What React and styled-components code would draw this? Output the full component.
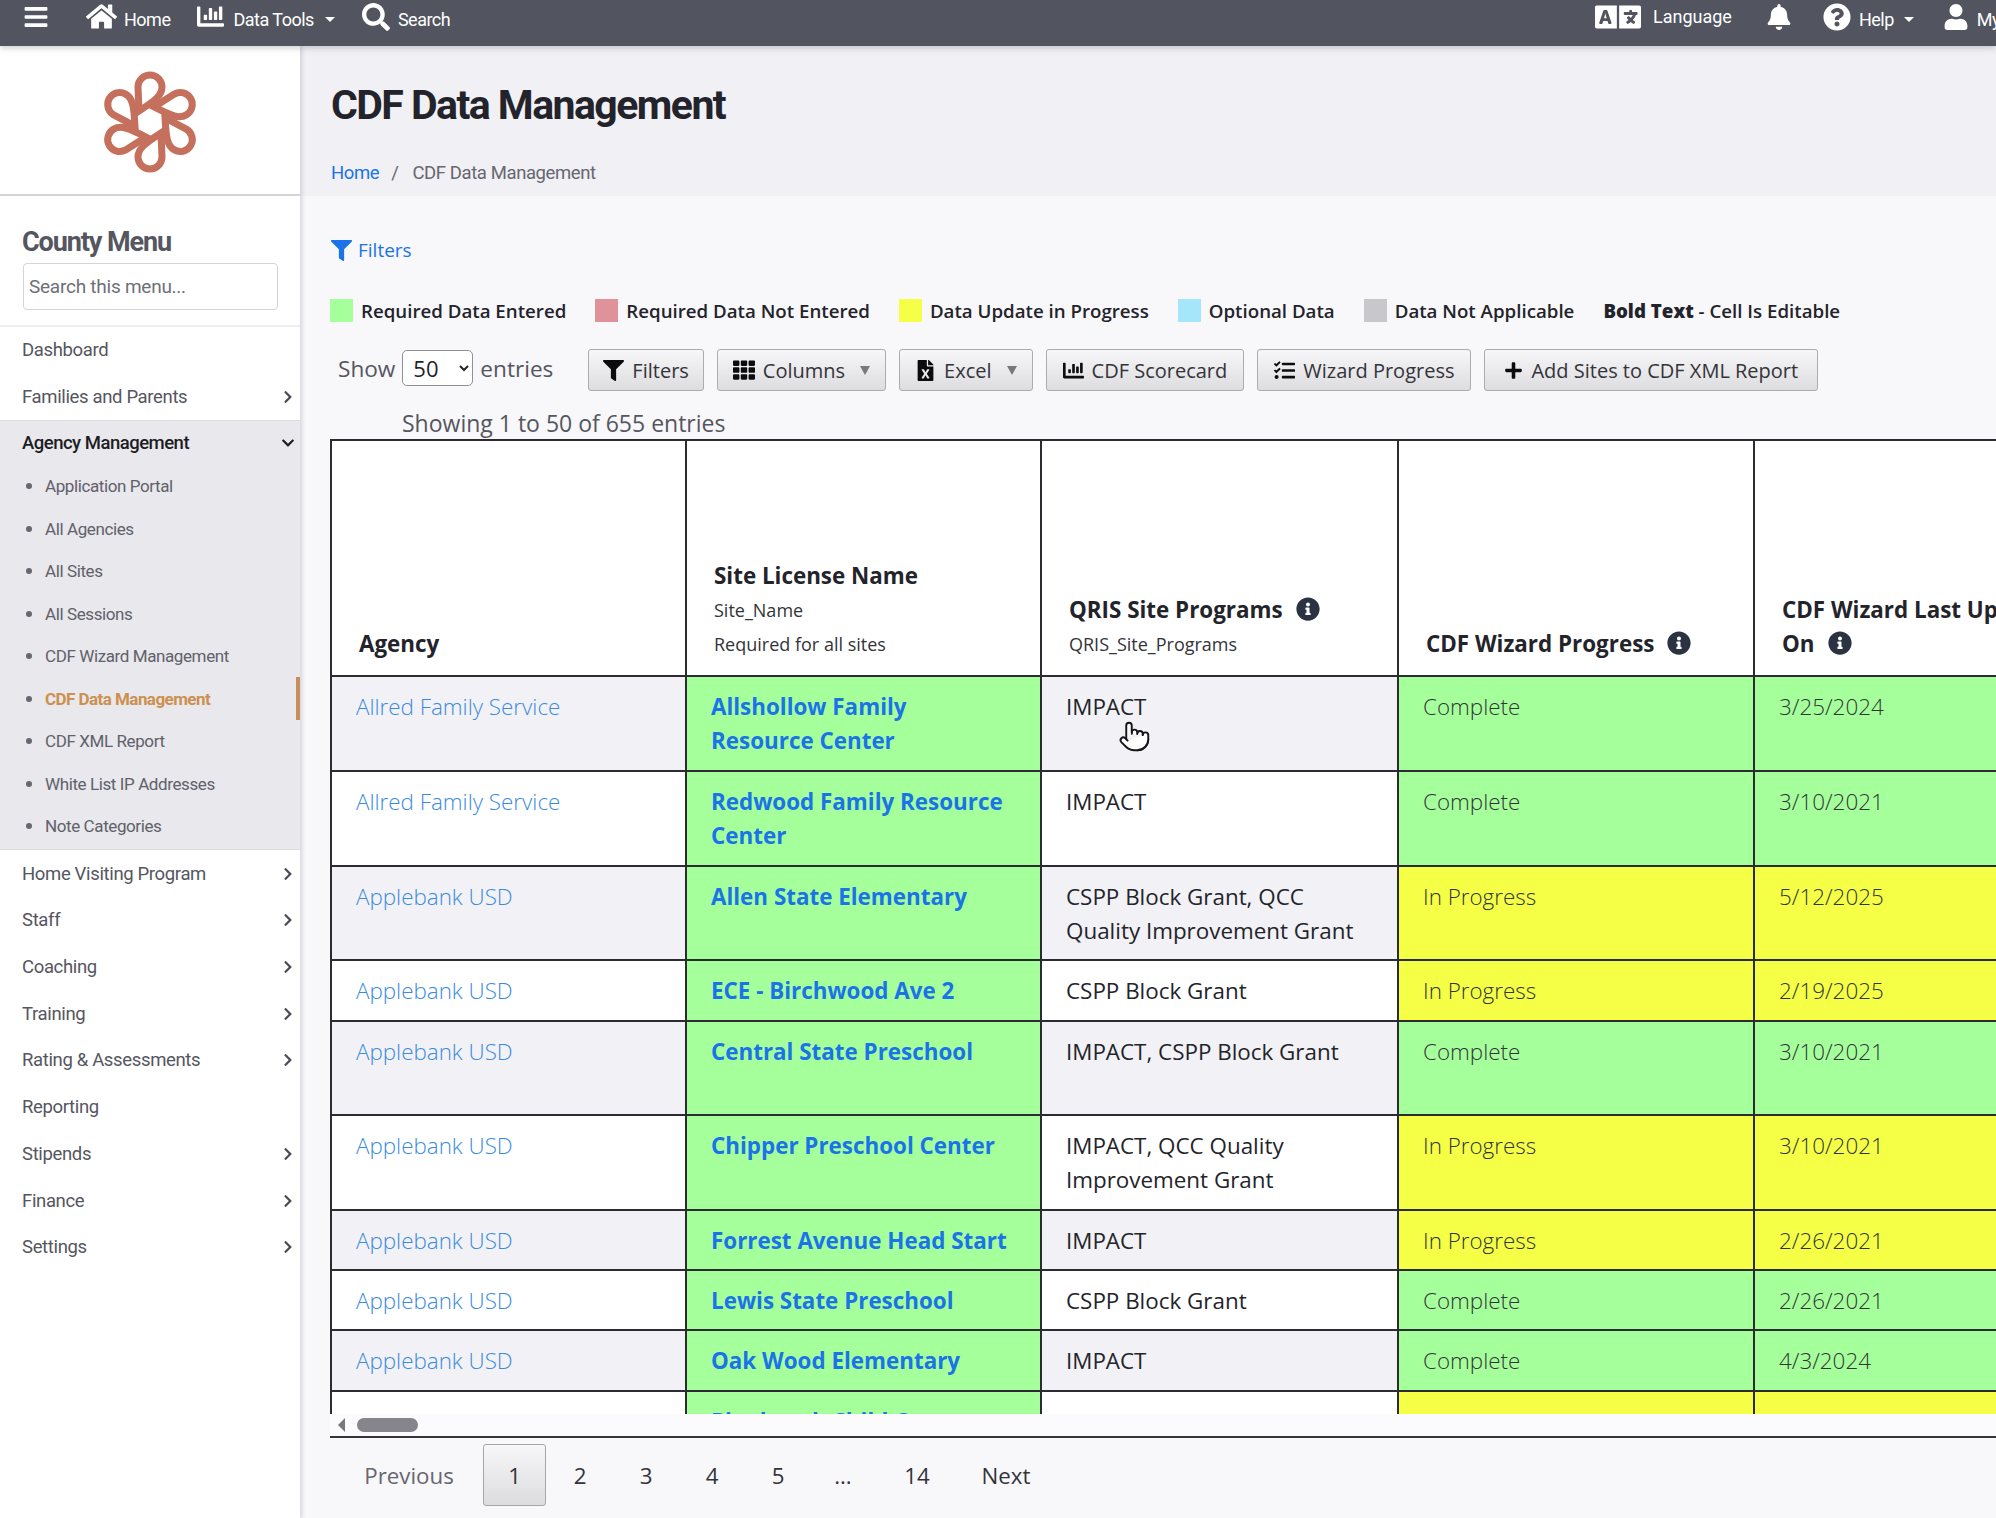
import React from 'react';
import styled, { createGlobalStyle } from 'styled-components';
import {
  FaBars, FaHome, FaChartBar, FaSearch, FaLanguage, FaBell, FaQuestionCircle, FaUser,
  FaFilter, FaTh, FaFileExcel, FaTasks, FaPlus, FaChevronRight, FaChevronDown, FaInfoCircle,
} from 'react-icons/fa';
import { Pointer } from 'lucide-react';

const GlobalStyle = createGlobalStyle`
  html, body {
    margin: 0;
    height: 100%;
    overflow: hidden;
    background: #f8f7fa;
    font-family: 'Open Sans', 'Liberation Sans', sans-serif;
  }
  * { box-sizing: border-box; }
`;

const Page = styled.div`
  width: 1996px;
  height: 1518px;
  display: flex;
  flex-direction: column;
  overflow: hidden;
`;

const TopBar = styled.header`
  flex: 0 0 46px;
  display: flex;
  align-items: center;
  padding-bottom: 13px;
  background: #52555f;
  color: #fff;
  font-family: Roboto, sans-serif;
  font-size: 18px;
  letter-spacing: -0.5px;
  overflow: hidden;
  position: relative;
  z-index: 3;
  box-shadow: 0 2px 6px rgba(60, 60, 80, 0.25);
`;

const TopLeft = styled.div`
  flex: 0 0 1595px;
  display: flex;
  align-items: center;
  padding-left: 23px;
  svg { display: block; }
`;

const TopRight = styled.div`
  flex: 0 0 auto;
  display: flex;
  align-items: center;
  white-space: nowrap;
  svg { display: block; }
`;

const NavItem = styled.span`
  display: flex;
  align-items: center;
  gap: ${(p) => p.$gap || 8}px;
  margin-left: ${(p) => p.$left || 0}px;
`;

const NavText = styled.span`
  padding-top: ${(p) => p.$down || 0}px;
  letter-spacing: ${(p) => (p.$wide ? 0 : -0.5)}px;
`;

const Caret = styled.i`
  width: 0;
  height: 0;
  margin-left: 2px;
  margin-top: 5px;
  border-left: 5px solid transparent;
  border-right: 5px solid transparent;
  border-top: 5px solid #fff;
`;

const Body = styled.div`
  flex: 1;
  display: flex;
  min-height: 0;
`;

const Sidebar = styled.aside`
  flex: 0 0 300px;
  background: #fff;
  display: flex;
  flex-direction: column;
  font-family: Roboto, sans-serif;
  position: relative;
  z-index: 2;
  box-shadow: 2px 0 4px rgba(60, 60, 80, 0.18);
`;

const LogoBox = styled.div`
  flex: 0 0 150px;
  display: flex;
  justify-content: center;
  padding-top: 24px;
  border-bottom: 2px solid #d4d3d8;
`;

const MenuHead = styled.div`
  flex: 0 0 131px;
  padding: 28px 22px 0 23px;
  border-bottom: 2px solid #eeedf0;
`;

const MenuTitle = styled.h2`
  margin: 0 0 3px -1px;
  font-size: 27px;
  line-height: 36px;
  font-weight: 700;
  letter-spacing: -1.1px;
  color: #55565f;
`;

const MenuSearch = styled.input`
  width: 255px;
  height: 47px;
  padding: 0 5px;
  border: 1px solid #d4d3d8;
  border-radius: 4px;
  background: #fff;
  font-family: Roboto, sans-serif;
  font-size: 19px;
  letter-spacing: -0.25px;
  color: #55565f;
  &::placeholder { color: #6e6f78; opacity: 1; }
`;

const MenuRow = styled.div`
  height: ${(p) => (p.$open ? 43.5 : 46.7)}px;
  display: flex;
  align-items: center;
  justify-content: space-between;
  padding: 0 5px 0 22px;
  font-size: 18.5px;
  font-weight: ${(p) => (p.$open ? 500 : 400)};
  color: ${(p) => (p.$open ? '#1d1d24' : '#55565f')};
  letter-spacing: ${(p) => (p.$open ? -0.5 : -0.35)}px;
  svg { font-size: 14px; color: ${(p) => (p.$open ? '#1d1d24' : '#4a4b54')}; }
`;

const MenuGroup = styled.div`
  background: #e9e8ec;
  border-top: 1px solid #dddce0;
  border-bottom: 1px solid #dddce0;
  padding-bottom: 2px;
`;

const SubRow = styled.div`
  height: 42.5px;
  display: flex;
  align-items: center;
  position: relative;
  padding-left: 26px;
  font-size: 17px;
  letter-spacing: ${(p) => (p.$active ? -0.55 : -0.4)}px;
  color: ${(p) => (p.$active ? '#cc9050' : '#60616a')};
  font-weight: ${(p) => (p.$active ? 700 : 400)};
  &::before {
    content: '';
    width: 6px;
    height: 6px;
    border-radius: 50%;
    background: #666770;
    margin-right: 13px;
  }
`;

const ActiveBar = styled.i`
  position: absolute;
  right: 0;
  top: 0;
  bottom: 0;
  width: 4px;
  background: #c98d5c;
`;

const Main = styled.main`
  flex: 1;
  min-width: 0;
  display: flex;
  flex-direction: column;
`;

const PageHead = styled.div`
  flex: 0 0 150px;
  background: #f1f0f4;
  padding: 32px 0 0 31px;
  box-shadow: 0 2px 5px rgba(60, 60, 80, 0.25);
  font-family: Roboto, sans-serif;
`;

const Title = styled.h1`
  margin: 0;
  font-size: 41px;
  line-height: 54px;
  font-weight: 700;
  letter-spacing: -1.55px;
  color: #23242b;
`;

const Crumbs = styled.div`
  margin-top: 28px;
  display: flex;
  align-items: center;
  font-size: 18.5px;
  line-height: 26px;
  letter-spacing: -0.4px;
  color: #666770;
  a { color: #1a73e8; text-decoration: none; }
  i { font-style: normal; margin: 0 14px 0 12px; }
`;

const Content = styled.div`
  flex: 1;
  padding-left: 30px;
  min-height: 0;
  overflow: hidden;
  background: #f8f7fa;
`;

const FilterLink = styled.a`
  margin-top: 39px;
  height: 30px;
  display: flex;
  align-items: center;
  gap: 6px;
  color: #1a73e8;
  font-size: 19px;
  padding-left: 1px;
`;

const Legend = styled.div`
  margin-top: 30px;
  height: 30px;
  display: flex;
  align-items: center;
  gap: 29px;
  font-size: 18.7px;
  font-weight: 600;
  color: #23242b;
  white-space: nowrap;
  b { font-weight: 800; }
`;

const LegendItem = styled.span`
  display: flex;
  align-items: center;
  gap: 8px;
  &::before {
    content: '';
    width: 23px;
    height: 23px;
    background: ${(p) => p.$color};
  }
`;

const Tools = styled.div`
  margin-top: 24px;
  height: 42px;
  display: flex;
  align-items: flex-start;
  font-size: 22.6px;
  color: #55565f;
`;

const ShowLabel = styled.label`
  display: flex;
  align-items: center;
  gap: 7px;
  height: 38px;
  padding-left: 8px;
  margin-right: 35px;
  white-space: nowrap;
`;

const EntrySelect = styled.select`
  width: 71px;
  height: 36px;
  padding-left: 6px;
  border: 1px solid #8f8f96;
  border-radius: 5px;
  background: #fff;
  font-family: 'Open Sans', sans-serif;
  font-size: 22px;
  color: #23242b;
`;

const ToolButton = styled.button`
  height: 42px;
  display: flex;
  align-items: center;
  gap: 8px;
  margin-right: 13px;
  padding: 0 ${(p) => p.$pad || 14}px;
  border: 1px solid #ababb0;
  border-radius: 3px;
  background: linear-gradient(#f7f6f8, #dddcdf);
  font-family: 'Open Sans', sans-serif;
  font-size: 20px;
  color: #33343a;
  white-space: nowrap;
  svg { color: #0c0c10; flex: none; }
`;

const DownMark = styled.i`
  margin-left: 7px;
  width: 0;
  height: 0;
  border-left: 5px solid transparent;
  border-right: 5px solid transparent;
  border-top: 9px solid #77777d;
`;

const Showing = styled.div`
  margin-top: 17px;
  padding-left: 72px;
  height: 30px;
  line-height: 30px;
  font-size: 23px;
  color: #55565f;
`;

const TableClip = styled.div`
  margin-top: 1px;
  height: 975px;
  overflow: hidden;
`;

const Table = styled.table`
  width: 1780px;
  table-layout: fixed;
  border-collapse: collapse;
  background: #fff;
`;

const Th = styled.th`
  height: 236px;
  padding: 0 40px 14px 27px;
  vertical-align: bottom;
  text-align: left;
  border: 2px solid #2b2b31;
  font-size: 22.4px;
  line-height: 34px;
  font-weight: 700;
  color: #23242b;
  svg { color: #2b3242; font-size: 24px; margin-left: 13px; vertical-align: -3px; }
`;

const ThSub = styled.div`
  font-size: 18px;
  font-weight: 400;
  line-height: 34px;
  color: #33343a;
`;

const Td = styled.td`
  padding: 13px 30px 11px 24px;
  vertical-align: top;
  border: 2px solid #2b2b31;
  font-size: 22.4px;
  line-height: 34.4px;
  font-weight: ${(p) => p.$weight || 400};
  color: ${(p) => p.$color || '#23242b'};
  background: ${(p) => p.$bg || 'transparent'};
  position: relative;
`;

const Row = styled.tr`
  background: ${(p) => (p.$even ? '#fff' : '#f2f1f5')};
  height: ${(p) => (p.$tall ? '94px' : 'auto')};
`;

const HandCursor = styled.span`
  position: absolute;
  left: 76px;
  top: 43px;
  display: block;
  line-height: 0;
`;

const ScrollTrack = styled.div`
  height: 24px;
  display: flex;
  align-items: center;
  gap: 12px;
  padding-left: 8px;
  background: #fbfafc;
  border-bottom: 2px solid #34343a;
`;

const ScrollArrow = styled.i`
  width: 0;
  height: 0;
  border-top: 7px solid transparent;
  border-bottom: 7px solid transparent;
  border-right: 7px solid #77777d;
`;

const ScrollThumb = styled.i`
  width: 61px;
  height: 14px;
  border-radius: 7px;
  background: #85858b;
`;

const Pager = styled.nav`
  margin-top: 6px;
  padding-left: 5px;
  display: flex;
  align-items: center;
  font-size: 22.3px;
  color: #33343a;
`;

const PageLink = styled.span`
  display: flex;
  align-items: center;
  justify-content: center;
  height: 62px;
  width: ${(p) => p.$w}px;
  color: ${(p) => (p.$muted ? '#66676f' : '#33343a')};
  ${(p) => p.$current && `
    margin-right: 1px;
    border: 1px solid #a5a5aa;
    border-radius: 3px;
    background: linear-gradient(#f7f6f8, #dcdbde);
  `}
`;

const Logo = () => (
  <svg width="104" height="104" viewBox="-52 -52 104 104" fill="none" stroke="#c4705c" strokeWidth="7">
    {[0, 60, 120, 180, 240, 300].map((a) => (
      <path key={a} transform={`rotate(${a})`} d="M11 11 L12 35 A12 12 0 0 1 -12 35 C-12 27 -6 22 11 11 Z" />
    ))}
  </svg>
);

const GREEN = '#a5ff9b';
const YELLOW = '#f4ff45';
const LINK = '#1a73e8';

const subMenu = [
  'Application Portal', 'All Agencies', 'All Sites', 'All Sessions', 'CDF Wizard Management',
  'CDF Data Management', 'CDF XML Report', 'White List IP Addresses', 'Note Categories',
];

const lowerMenu = [
  ['Home Visiting Program', true], ['Staff', true], ['Coaching', true], ['Training', true],
  ['Rating & Assessments', true], ['Reporting', false], ['Stipends', true], ['Finance', true], ['Settings', true],
];

const legend = [
  ['Required Data Entered', GREEN],
  ['Required Data Not Entered', '#e0929a'],
  ['Data Update in Progress', YELLOW],
  ['Optional Data', '#a6e6fb'],
  ['Data Not Applicable', '#c8c7cc'],
];

const rows = [
  ['Allred Family Service', 'Allshollow Family Resource Center', 'IMPACT', 'Complete', '3/25/2024'],
  ['Allred Family Service', 'Redwood Family Resource Center', 'IMPACT', 'Complete', '3/10/2021'],
  ['Applebank USD', 'Allen State Elementary', 'CSPP Block Grant, QCC Quality Improvement Grant', 'In Progress', '5/12/2025'],
  ['Applebank USD', 'ECE - Birchwood Ave 2', 'CSPP Block Grant', 'In Progress', '2/19/2025'],
  ['Applebank USD', 'Central State Preschool', 'IMPACT, CSPP Block Grant', 'Complete', '3/10/2021', true],
  ['Applebank USD', 'Chipper Preschool Center', 'IMPACT, QCC Quality Improvement Grant', 'In Progress', '3/10/2021'],
  ['Applebank USD', 'Forrest Avenue Head Start', 'IMPACT', 'In Progress', '2/26/2021'],
  ['Applebank USD', 'Lewis State Preschool', 'CSPP Block Grant', 'Complete', '2/26/2021'],
  ['Applebank USD', 'Oak Wood Elementary', 'IMPACT', 'Complete', '4/3/2024'],
  ['Applebank USD', 'Pinebrook Child Center', 'CSPP Block Grant', 'In Progress', '3/10/2021'],
];

const App = () => (
  <Page>
    <GlobalStyle />
    <TopBar>
      <TopLeft>
        <FaBars size={26} />
        <NavItem $left={37} $gap={7}><FaHome size={31} /><NavText $down={5}>Home</NavText></NavItem>
        <NavItem $left={27} $gap={9}><FaChartBar size={27} /><NavText $down={5}>Data Tools</NavText><Caret /></NavItem>
        <NavItem $left={27}><FaSearch size={28} /><NavText $down={5}>Search</NavText></NavItem>
      </TopLeft>
      <TopRight>
        <NavItem $gap={12}><FaLanguage size={46} /><NavText $wide>Language</NavText></NavItem>
        <NavItem $left={34}><FaBell size={26} /></NavItem>
        <NavItem $left={31}><FaQuestionCircle size={28} /><NavText $down={5}>Help</NavText><Caret /></NavItem>
        <NavItem $left={29}><FaUser size={26} /><NavText $down={5}>My Account</NavText></NavItem>
      </TopRight>
    </TopBar>
    <Body>
      <Sidebar>
        <LogoBox><Logo /></LogoBox>
        <MenuHead>
          <MenuTitle>County Menu</MenuTitle>
          <MenuSearch placeholder="Search this menu..." />
        </MenuHead>
        <MenuRow>Dashboard</MenuRow>
        <MenuRow>Families and Parents<FaChevronRight /></MenuRow>
        <MenuGroup>
          <MenuRow $open>Agency Management<FaChevronDown /></MenuRow>
          {subMenu.map((name) => (
            <SubRow key={name} $active={name === 'CDF Data Management'}>
              {name}
              {name === 'CDF Data Management' && <ActiveBar />}
            </SubRow>
          ))}
        </MenuGroup>
        {lowerMenu.map(([name, more]) => (
          <MenuRow key={name}>{name}{more && <FaChevronRight />}</MenuRow>
        ))}
      </Sidebar>
      <Main>
        <PageHead>
          <Title>CDF Data Management</Title>
          <Crumbs><a href="#home">Home</a><i>/</i>CDF Data Management</Crumbs>
        </PageHead>
        <Content>
          <FilterLink><FaFilter size={21} />Filters</FilterLink>
          <Legend>
            {legend.map(([label, color]) => (
              <LegendItem key={label} $color={color}>{label}</LegendItem>
            ))}
            <span><b>Bold Text</b> - Cell Is Editable</span>
          </Legend>
          <Tools>
            <ShowLabel>
              Show
              <EntrySelect defaultValue="50"><option>50</option></EntrySelect>
              entries
            </ShowLabel>
            <ToolButton><FaFilter size={21} />Filters</ToolButton>
            <ToolButton $pad={15}><FaTh size={22} />Columns<DownMark /></ToolButton>
            <ToolButton $pad={15}><FaFileExcel size={21} />Excel<DownMark /></ToolButton>
            <ToolButton $pad={16}><FaChartBar size={21} />CDF Scorecard</ToolButton>
            <ToolButton $pad={16}><FaTasks size={21} />Wizard Progress</ToolButton>
            <ToolButton $pad={19}><FaPlus size={19} />Add Sites to CDF XML Report</ToolButton>
          </Tools>
          <Showing>Showing 1 to 50 of 655 entries</Showing>
          <TableClip>
            <Table>
              <colgroup>
                <col width="355" /><col width="355" /><col width="357" /><col width="356" /><col width="357" />
              </colgroup>
              <thead>
                <tr>
                  <Th>Agency</Th>
                  <Th>
                    Site License Name
                    <ThSub>Site_Name</ThSub>
                    <ThSub>Required for all sites</ThSub>
                  </Th>
                  <Th>
                    QRIS Site Programs<FaInfoCircle />
                    <ThSub>QRIS_Site_Programs</ThSub>
                  </Th>
                  <Th>CDF Wizard Progress<FaInfoCircle /></Th>
                  <Th>CDF Wizard Last Updated On<FaInfoCircle /></Th>
                </tr>
              </thead>
              <tbody>
                {rows.map(([agency, site, programs, progress, date, tall], i) => {
                  const fill = progress === 'Complete' ? GREEN : YELLOW;
                  return (
                    <Row key={site} $even={i % 2 === 1} $tall={tall}>
                      <Td $color="#3a8be0" $weight={300}>{agency}</Td>
                      <Td $bg={GREEN} $color={LINK} $weight={700}>{site}</Td>
                      <Td>
                        {programs}
                        {i === 0 && (
                          <HandCursor><Pointer size={33} fill="#fff" color="#16161a" strokeWidth={1.4} /></HandCursor>
                        )}
                      </Td>
                      <Td $bg={fill} $color="#33343a" $weight={300}>{progress}</Td>
                      <Td $bg={fill} $color="#33343a" $weight={300}>{date}</Td>
                    </Row>
                  );
                })}
              </tbody>
            </Table>
          </TableClip>
          <ScrollTrack><ScrollArrow /><ScrollThumb /></ScrollTrack>
          <Pager>
            <PageLink $w={148} $muted>Previous</PageLink>
            <PageLink $w={63} $current>1</PageLink>
            <PageLink $w={66}>2</PageLink>
            <PageLink $w={66}>3</PageLink>
            <PageLink $w={66}>4</PageLink>
            <PageLink $w={66}>5</PageLink>
            <PageLink $w={64}>…</PageLink>
            <PageLink $w={84}>14</PageLink>
            <PageLink $w={94}>Next</PageLink>
          </Pager>
        </Content>
      </Main>
    </Body>
  </Page>
);

export default App;
